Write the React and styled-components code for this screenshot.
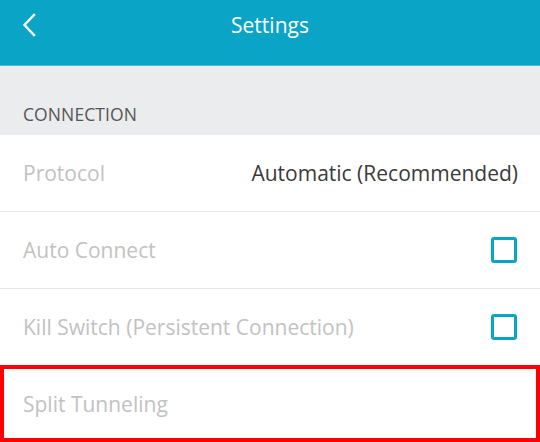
import React from "react";
import styled, { createGlobalStyle } from "styled-components";

const Global = createGlobalStyle`
  html, body { margin: 0; padding: 0; background: #ffffff; }
  body { font-family: "Open Sans", "Noto Sans", sans-serif; }
`;

const Page = styled.div`
  width: 540px;
  height: 442px;
  overflow: hidden;
  display: flex;
  flex-direction: column;
  background: #ffffff;
`;

const Header = styled.header`
  height: 66px;
  flex: none;
  background: #0aa4c6;
  border-bottom: 1px solid #4cbcd6;
  display: grid;
  grid-template-columns: 60px 1fr 60px;
  align-items: center;
  box-sizing: border-box;
`;

const BackButton = styled.button`
  border: 0;
  background: transparent;
  padding: 0 0 0 22px;
  height: 100%;
  display: flex;
  align-items: center;
  cursor: pointer;
  margin-top: -16px;
`;

const Title = styled.h1`
  margin: 0;
  text-align: center;
  color: #ffffff;
  font-size: 21px;
  font-weight: 400;
  margin-top: -16px;
`;

const SectionHeader = styled.div`
  height: 69px;
  flex: none;
  background: #ebecee;
  display: flex;
  align-items: flex-end;
  padding: 0 23px 9px;
  box-sizing: border-box;
  color: #555555;
  font-size: 17.5px;
  letter-spacing: 0.1px;
`;

const Row = styled.div`
  height: 77px;
  flex: none;
  display: flex;
  align-items: center;
  justify-content: space-between;
  padding: 0 22px 0 23px;
  box-sizing: border-box;
  border-bottom: ${(p) => (p.$last ? "none" : "1px solid #e6e6e6")};
  outline: ${(p) => (p.$highlight ? "4px solid #ff0000" : "none")};
  outline-offset: -4px;
  margin-top: ${(p) => (p.$highlight ? "-1px" : "0")};
`;

const Label = styled.span`
  color: #c2c2c2;
  font-size: 21px;
`;

const Value = styled.span`
  color: #3a3a3a;
  font-size: 21px;
`;

const Checkbox = styled.span`
  width: 26px;
  height: 26px;
  box-sizing: border-box;
  border: 3px solid #0aa4c6;
  border-radius: 3px;
  margin-right: 1px;
`;

export default function App() {
  return (
    <Page>
      <Global />
      <Header>
        <BackButton aria-label="Back">
          <svg width="14" height="24" viewBox="0 0 14 24" fill="none">
            <path d="M12 2 L2.5 12 L12 22" stroke="#ffffff" strokeWidth="2.4" strokeLinecap="square" strokeLinejoin="miter" />
          </svg>
        </BackButton>
        <Title>Settings</Title>
        <span />
      </Header>
      <SectionHeader>CONNECTION</SectionHeader>
      <Row>
        <Label>Protocol</Label>
        <Value>Automatic (Recommended)</Value>
      </Row>
      <Row>
        <Label>Auto Connect</Label>
        <Checkbox />
      </Row>
      <Row>
        <Label>Kill Switch (Persistent Connection)</Label>
        <Checkbox />
      </Row>
      <Row $highlight $last>
        <Label>Split Tunneling</Label>
      </Row>
    </Page>
  );
}
